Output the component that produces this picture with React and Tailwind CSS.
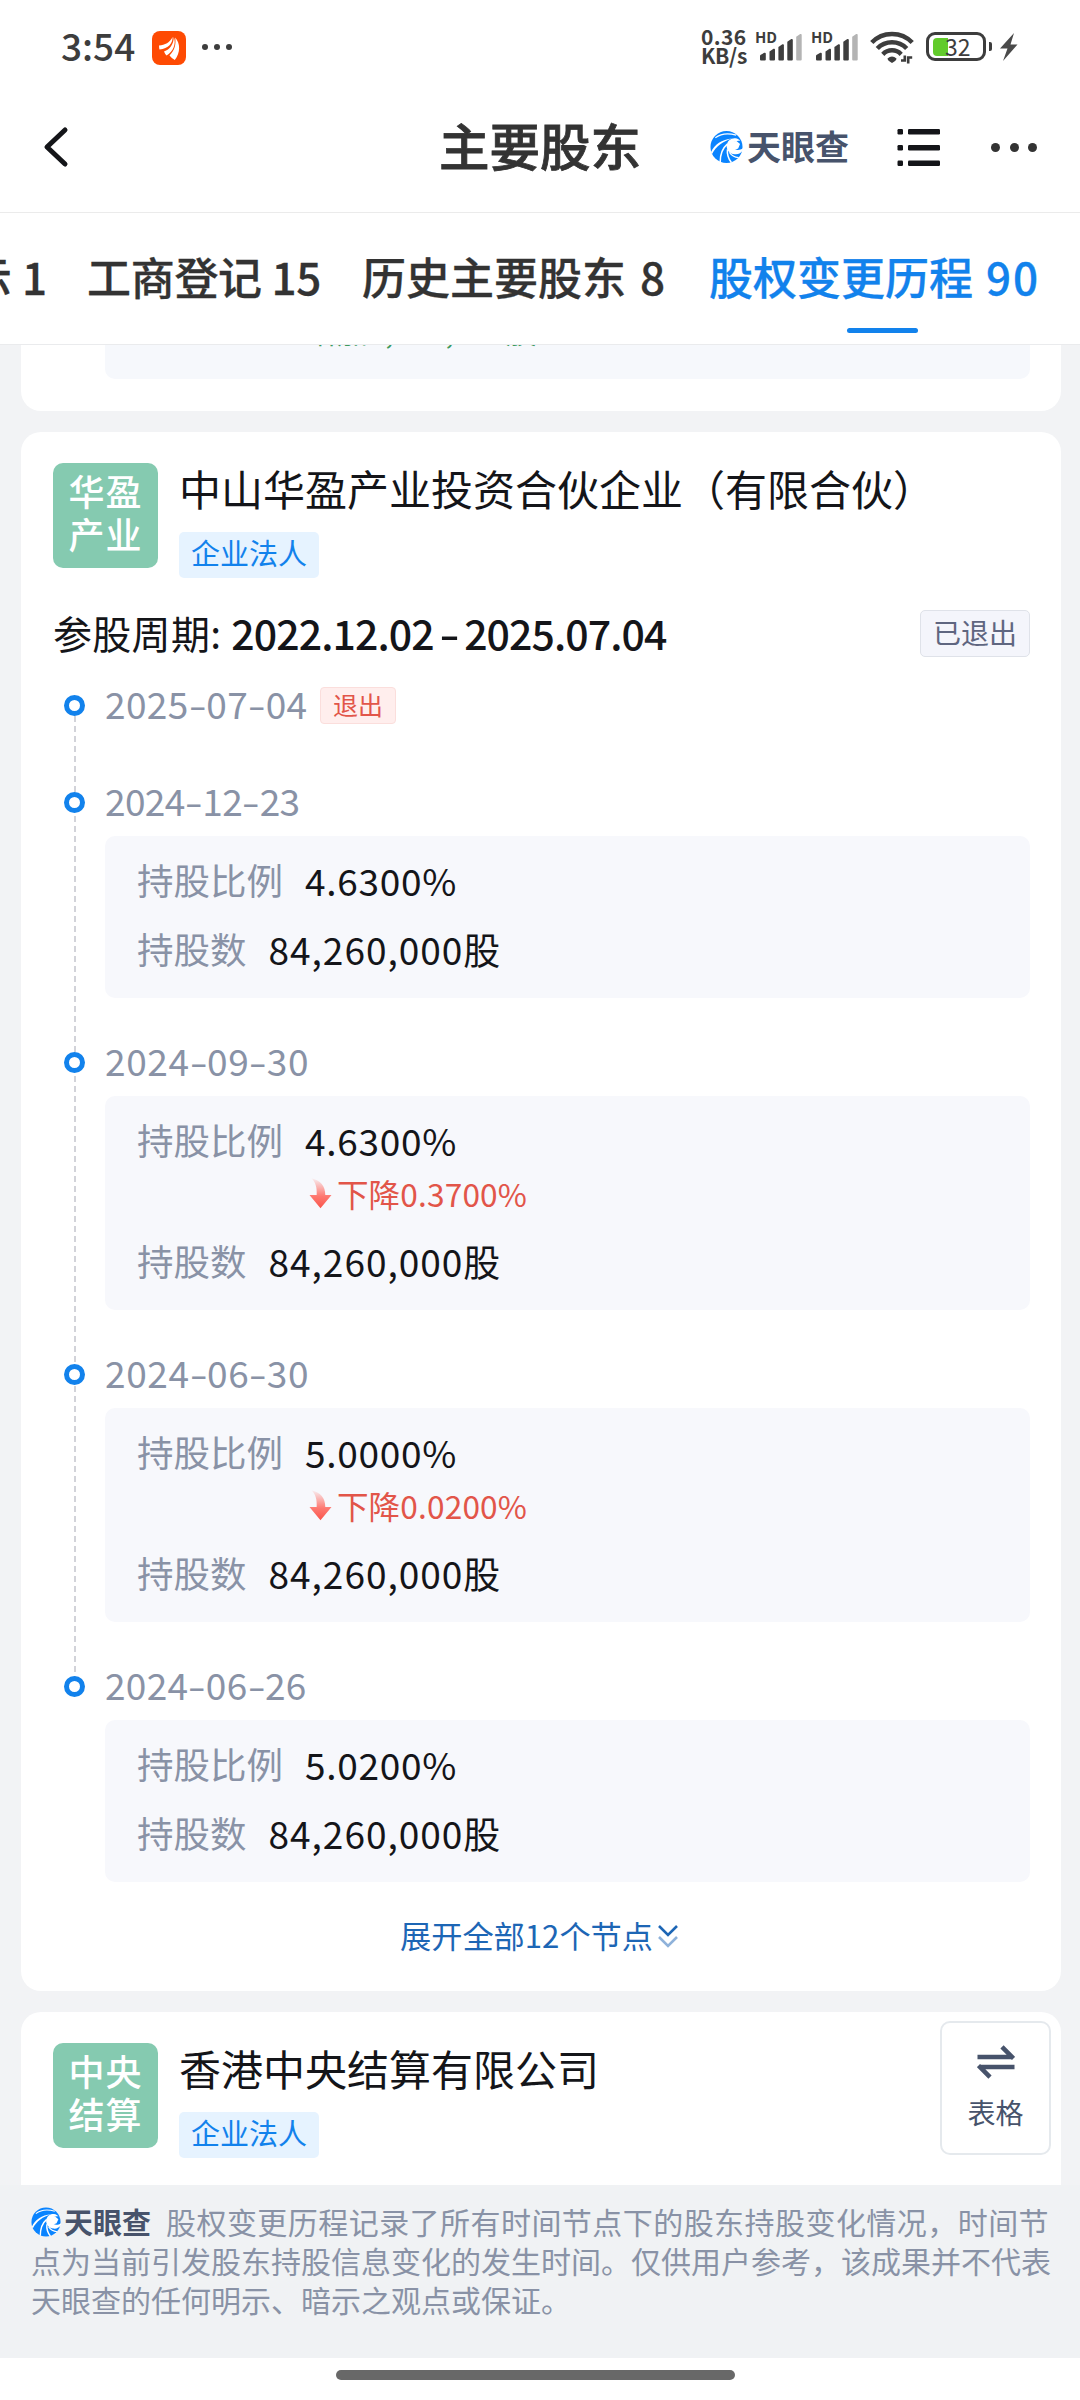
import React from "react";

function BrandMark({ className }) {
  return (
    <svg viewBox="0 0 34 34" className={className} fill="none">
      <circle cx="17" cy="17" r="16.5" fill="#0a84ff" />
      <path d="M34.500 19.500C33 22.500 29.500 25 25.500 24.500 20 24 17 20 17.200 15.800 17.500 10.500 22 7.500 26 8c2.500.3 4.300 1.500 5.200 2.800C28.500 10.200 25.500 11 24 13c-1.500 2.200-.8 5 1.500 6.300 2.800 1.500 6 .9 9-1.300Z" fill="#fff" />
      <path d="M21 12.500 27 10.500 31 14 29 18.500 24 20.500 20.500 17Z" fill="#fff" />
      <path d="M5.500 7.500C10 4 18 2.200 27 4.800" stroke="#fff" strokeWidth="1.200" />
      <path d="M1 22.500C4.500 14.500 12 9 23 8.200 13.500 11 6.500 15.500 2 24.500Z" fill="#fff" />
      <path d="M10.500 32.500C10.500 25 12.500 18.500 17.800 14" stroke="#fff" strokeWidth="1.600" />
      <path d="M22 33C18.800 29 17.500 24 18 19.500" stroke="#fff" strokeWidth="1.600" />
      <path d="M29.500 28C25.500 27.500 22 25.500 20 22.500" stroke="#fff" strokeWidth="1.200" />
    </svg>
  );
}

function Signal() {
  return (
    <svg viewBox="0 0 42 28" className="h-[28px] w-[42px]" fill="#3d3d3d">
      <path d="M0 26.500V23q0-.8.800-1.300l3.500-1.900q1.500-.5 1.500 1v5.700q0 1-1 1H1q-1 0-1-1Z" />
      <path d="M9.500 26.500V18.500l4-2.700q1.500-.5 1.500 1v9.700q0 1-1 1h-3.500q-1 0-1-1Z" />
      <path d="M18.400 26.500V14l4-2.700q1.500-.5 1.500 1v14.200q0 1-1 1h-3.500q-1 0-1-1Z" />
      <path d="M27.300 26.500V8.700l4-2.700q1.500-.5 1.500 1v19.500q0 1-1 1h-3.500q-1 0-1-1Z" />
      <path d="M36.200 26.500V3.700l4-2.700q1.500-.5 1.500 1v24.500q0 1-1 1h-3.500q-1 0-1-1Z" fill="#b4b4b4" />
    </svg>
  );
}

function StatusBar() {
  return (
    <div className="flex h-[95px] items-start text-[#3d3d3d]">
      <div className="ml-[61px] mt-[25px] w-[91px] text-[37px] leading-[40px] font-medium">3:54</div>
      <svg viewBox="0 0 34 34" className="mt-[31px] h-[34px] w-[34px]">
        <rect width="34" height="34" rx="8" fill="#fe4a03" />
        <path d="M7 14.500C13 14 18 11.500 20.500 6c.5 6-4 11.500-13 12.500Q7 16.500 7 14.500Z" fill="#fff" />
        <path d="M12 20.500c6-2 9.500-7 9.800-14.500C24.500 13 21 21 14.500 24.500Q13 23 12 20.500Z" fill="#fff" />
        <path d="M17.500 24.500C22.500 19.500 24.300 13.500 23.200 6.500c5.300 6 5.300 15-.4 22.500q-3-1.500-5.300-4.500Z" fill="#fff" />
      </svg>
      <div className="ml-[16px] mt-[44px] flex gap-[6px]">
        <span className="size-[6px] rounded-full bg-[#3d3d3d]" />
        <span className="size-[6px] rounded-full bg-[#3d3d3d]" />
        <span className="size-[6px] rounded-full bg-[#3d3d3d]" />
      </div>
      <div className="ml-auto mt-[27px] w-[54px] text-[21px] leading-[19px] font-bold whitespace-nowrap">
        <div className="tracking-[0.4px]">0.36</div>
        <div className="tracking-[-0.3px]">KB/s</div>
      </div>
      <div className="relative mt-[33px] ml-[5px] w-[56px]">
        <span className="absolute -left-[5px] -top-[3px] text-[15px] leading-[14px] font-bold">HD</span>
        <Signal />
      </div>
      <div className="relative mt-[33px] w-[54px]">
        <span className="absolute -left-[5px] -top-[3px] text-[15px] leading-[14px] font-bold">HD</span>
        <Signal />
      </div>
      <svg viewBox="0 0 44 34" className="mt-[31px] h-[34px] w-[44px]" fill="none" stroke="#3d3d3d" strokeWidth="4.500">
        <path d="M1.800 11.500C12.500 0 31.500 0 42.200 11.500" />
        <path d="M7.300 17.500c8-8.300 21.400-8.300 29.400 0" />
        <path d="M12.800 23.300c5.200-5.300 13.200-5.300 18.400 0" />
        <path d="M17.500 27.500Q22 23.500 26.500 27.500q0 2-4.500 4.500-4.500-2.500-4.500-4.500Z" fill="#3d3d3d" stroke="none" />
        <path d="M31 29.500h3.800V24.500M38.200 32.500V26.500h4" strokeWidth="2.600" stroke="#3d3d3d" />
      </svg>
      <div className="mt-[32px] ml-[12px] flex h-[29px] w-[60px] items-center rounded-[9px] border-[3px] border-[#3d3d3d] pl-[4px]">
        <span className="h-[18px] w-[15px] rounded-l-[4px] bg-[#62cb2b]" />
        <span className="-ml-[3px] pb-[2px] text-[23px] leading-[20px]">32</span>
      </div>
      <span className="mt-[42px] ml-[3px] h-[9px] w-[3px] rounded-r-[2px] bg-[#3d3d3d]" />
      <svg viewBox="0 0 18 28" className="mt-[33px] mr-[62px] ml-[8px] h-[28px] w-[18px]" fill="#4a4a4a">
        <path d="M14 0 0 15.500h7.500L3 28 17.500 11.500H10.500Z" />
      </svg>
    </div>
  );
}

function NavBar() {
  return (
    <div className="flex h-[118px] items-start border-b border-[#ebebeb]">
      <svg viewBox="0 0 26 42" className="mt-[31px] ml-[43px] h-[42px] w-[26px]" fill="none" stroke="#141519" strokeWidth="5" strokeLinecap="round" strokeLinejoin="round">
        <path d="M22 4 4 21l18 17" />
      </svg>
      <div className="mt-[19px] ml-[370px] w-[271px] text-[50.500px] leading-[60px] font-medium text-[#333] [-webkit-text-stroke:0.8px]">主要股东</div>
      <BrandMark className="mt-[35px] h-[34px] w-[33px]" />
      <div className="mt-[31px] ml-[4px] w-[150px] text-[34px] leading-[40px] font-bold text-[#47536b]">天眼查</div>
      <svg viewBox="0 0 44 42" className="mt-[32px] h-[42px] w-[44px]" fill="#141519">
        <rect x="0.500" y="2" width="5.500" height="5.500" rx="1.200" />
        <rect x="0.500" y="18" width="5.500" height="5.500" rx="1.200" />
        <rect x="0.500" y="33.500" width="5.500" height="5.500" rx="1.200" />
        <rect x="11" y="2" width="32" height="5.500" rx="1.200" />
        <rect x="11" y="18" width="32" height="5.500" rx="1.200" />
        <rect x="11" y="33.500" width="32" height="5.500" rx="1.200" />
      </svg>
      <div className="mt-[48px] ml-[50px] flex gap-[9.500px]">
        <span className="size-[9px] rounded-full bg-[#333]" />
        <span className="size-[9px] rounded-full bg-[#333]" />
        <span className="size-[9px] rounded-full bg-[#333]" />
      </div>
    </div>
  );
}

function Tabs() {
  return (
    <div className="flex h-[132px] overflow-hidden border-b border-[#eaebed] pt-[37px] text-[44px] leading-[52px] font-medium whitespace-nowrap text-[#333] [-webkit-text-stroke:0.3px]">
      <div className="-ml-[32px] w-[119px]">示 1</div>
      <div className="w-[275px] tracking-[-0.300px]">工商登记 15</div>
      <div className="w-[347px] [word-spacing:4px]">历史主要股东 8</div>
      <div className="flex flex-col text-[#1282ec]">
        <span className="[word-spacing:3px]">股权变更历程 <span className="tracking-[2px]">90</span></span>
        <span className="mt-[26px] ml-[138px] h-[5px] w-[71px] rounded-full bg-[#1282ec]" />
      </div>
    </div>
  );
}

function Company({ lines, name }) {
  return (
    <div className="flex">
      <div className="flex h-[105px] w-[105px] flex-col items-center rounded-[10px] bg-[#85cab0] pt-[6px] text-[36px] leading-[43px] font-medium tracking-[1px] text-white">
        <span>{lines[0]}</span>
        <span>{lines[1]}</span>
      </div>
      <div className="ml-[21px]">
        <div className="h-[69px] text-[42px] leading-[50px] whitespace-nowrap text-[#141519]">{name}</div>
        <div className="flex h-[46px] w-[140px] items-center justify-center rounded-[5px] bg-[#e6f3ff] pb-[6px] text-[29px] leading-[40px] text-[#1282ec]">企业法人</div>
      </div>
    </div>
  );
}

function Dot() {
  return <span className="mt-[15px] ml-[11px] block size-[21px] shrink-0 rounded-full border-[5px] border-[#1282ec] bg-white" />;
}

/* Wide dash between the parts of a date. */
function Dash() {
  return <span className="inline-block w-[17.500px] scale-x-[1.400] text-center tracking-normal">-</span>;
}

function DateLabel({ value }) {
  const [year, month, day] = value.split("-");
  return (
    <>
      {year}
      <Dash />
      {month}
      <Dash />
      {day}
    </>
  );
}

function DropArrow() {
  return (
    <svg viewBox="0 0 24 32" className="h-[31px] w-[23px]">
      <defs>
        <linearGradient id="drop" x1="0" y1="0" x2="0" y2="1">
          <stop offset="0" stopColor="#ff5a4f" stopOpacity="0.050" />
          <stop offset="0.600" stopColor="#ff6258" stopOpacity="0.850" />
          <stop offset="1" stopColor="#f9544a" />
        </linearGradient>
      </defs>
      <path d="M2.500 0C12 2 17 8 17 17.500h6.500L12 31.500.5 17.500H8C8.500 10 7 4 2.500 0Z" fill="url(#drop)" />
    </svg>
  );
}

function Field({ label, children }) {
  return (
    <div className="flex h-[42px] items-center text-[36.500px] leading-[42px] whitespace-nowrap">
      <span className="mr-[22px] text-[#8992a6]">{label}</span>
      <span className="text-[37px] text-[#141519]">{children}</span>
    </div>
  );
}

function Node({ date, spacing, ratio, drop }) {
  return (
    <div className="flex">
      <Dot />
      <div className="ml-[20px] flex-1 pb-[39px]">
        <div className={`h-[48px] text-[37px] leading-[46px] text-[#8992a6] ${spacing}`}>
          <DateLabel value={date} />
        </div>
        <div className="mt-[11px] rounded-[10px] bg-[#f7f8fc] px-[32px] pt-[23px] pb-[28px]">
          <Field label="持股比例"><span className="tracking-[0.700px]">{ratio}</span></Field>
          {drop && (
            <div className="mt-[8px] ml-[172px] flex h-[48px] items-center text-[31.600px] leading-[40px] text-[#e25549]">
              <DropArrow />
              <span className="ml-[5px]">下降<span className="tracking-[0.200px]">{drop}</span></span>
            </div>
          )}
          <div className={drop ? "mt-[23px]" : "mt-[27px]"}>
            <Field label="持股数"><span className="tracking-[1px]">84,260,000</span>股</Field>
          </div>
        </div>
      </div>
    </div>
  );
}

const nodes = [
  { date: "2024-12-23", spacing: "tracking-[-0.600px]", ratio: "4.6300%" },
  { date: "2024-09-30", spacing: "tracking-[0.600px]", ratio: "4.6300%", drop: "0.3700%" },
  { date: "2024-06-30", spacing: "tracking-[0.600px]", ratio: "5.0000%", drop: "0.0200%" },
  { date: "2024-06-26", spacing: "tracking-[0.300px]", ratio: "5.0200%" },
];

export default function App() {
  return (
    <div className="flex h-[2400px] w-[1080px] flex-col overflow-hidden bg-white font-['Noto_Sans_CJK_SC',sans-serif]">
      <StatusBar />
      <NavBar />
      <Tabs />
      <main className="relative h-[1840px] overflow-hidden bg-[#f2f3f5] pr-[19px] pl-[21px]">
        <section className="h-[66px] rounded-b-[20px] bg-white pr-[31px] pl-[84px]">
          <div className="h-[34px] overflow-hidden rounded-b-[10px] bg-[#f6f8fc] pl-[201px] text-[31px] leading-[36px] whitespace-nowrap text-[#3c9a5f]">
            <div className="-mt-[33px]">增加1,000,000股</div>
          </div>
        </section>

        <section className="mt-[21px] h-[1559px] rounded-[20px] bg-white pt-[31px] pr-[31px] pl-[32px]">
          <Company lines={["华盈", "产业"]} name="中山华盈产业投资合伙企业（有限合伙）" />
          <div className="mt-[32px] flex h-[47px] items-center justify-between">
            <div className="flex pb-[3px] text-[39px] leading-[47px] whitespace-nowrap text-[#141519]">
              <span className="tracking-[0.300px]">参股周期:</span>
              <span className="ml-[10px] text-[41px] font-medium tracking-[-0.900px]">2022.12.02 <span className="inline-block scale-x-[1.400]">-</span> 2025.07.04</span>
            </div>
            <div className="flex h-[47px] w-[110px] items-center justify-center rounded-[5px] border border-[#dfe2e9] bg-[#f4f5fb] pb-[3px] text-[28px] leading-[40px] text-[#5f6680]">已退出</div>
          </div>

          <div className="relative mt-[23px]">
            <span className="absolute top-[36px] left-[21px] h-[962px] w-[2px] bg-[repeating-linear-gradient(to_bottom,#d2d3d9_0_6px,transparent_6px_10px)]" />
            <div className="relative flex h-[97px]">
              <Dot />
              <div className="ml-[20px] w-[204px] text-[37px] leading-[46px] tracking-[0.400px] text-[#8992a6]">
                <DateLabel value="2025-07-04" />
              </div>
              <div className="mt-[7px] ml-[11px] flex h-[37px] w-[76px] items-center justify-center rounded-[4px] border border-[#fbdedc] bg-[#ffeeed] pb-[3px] text-[25px] leading-[34px] text-[#e25549]">退出</div>
            </div>
            <div className="relative">
              {nodes.map((n) => (
                <Node key={n.date} {...n} />
              ))}
            </div>
          </div>

          <div className="-mt-[8px] flex items-center justify-center pr-[5px] text-[31.200px] leading-[44px] text-[#1d66b5]">
            展开全部12个节点
            <svg viewBox="0 0 20 24" className="mt-[2px] ml-[5px] h-[24px] w-[20px]" fill="none" strokeWidth="2.600">
              <path d="m1 2 9 9 9-9" stroke="#1d66b5" />
              <path d="m1 13 9 9 9-9" stroke="#8fb2da" />
            </svg>
          </div>
        </section>

        <section className="mt-[21px] h-[240px] rounded-t-[20px] bg-white pt-[31px] pl-[32px]">
          <Company lines={["中央", "结算"]} name="香港中央结算有限公司" />
        </section>

        <button className="absolute top-[1676px] left-[940px] flex h-[134px] w-[111px] flex-col items-center rounded-[10px] border-2 border-[#e5e9ed] bg-white pt-[22px] text-[28px] leading-[40px] text-[#47536b]">
          <svg viewBox="0 0 38 34" className="h-[34px] w-[38px] shrink-0" fill="none" stroke="#47536b" strokeWidth="4.500">
            <path d="M0.500 12H36M36.500 13.500 25 1.800" />
            <path d="M37.500 22H2M1.500 20.500 13 32.200" />
          </svg>
          <span className="mt-[13px]">表格</span>
        </button>
      </main>

      <footer className="h-[173px] bg-[#f0f2f4] pt-[17px] pl-[31px] text-[30px] leading-[39px] whitespace-nowrap text-[#8992a6]">
        <div className="flex items-center">
          <BrandMark className="h-[30px] w-[30px]" />
          <span className="ml-[3px] w-[102px] text-[29px] font-bold text-[#47536b]">天眼查</span>
          <span className="tracking-[0.450px]">股权变更历程记录了所有时间节点下的股东持股变化情况，时间节</span>
        </div>
        <div>点为当前引发股东持股信息变化的发生时间。仅供用户参考，该成果并不代表</div>
        <div>天眼查的任何明示、暗示之观点或保证。</div>
      </footer>
      <div className="flex h-[42px] bg-white pt-[12px]">
        <span className="ml-[336px] h-[10px] w-[399px] rounded-full bg-[#686868]" />
      </div>
    </div>
  );
}
